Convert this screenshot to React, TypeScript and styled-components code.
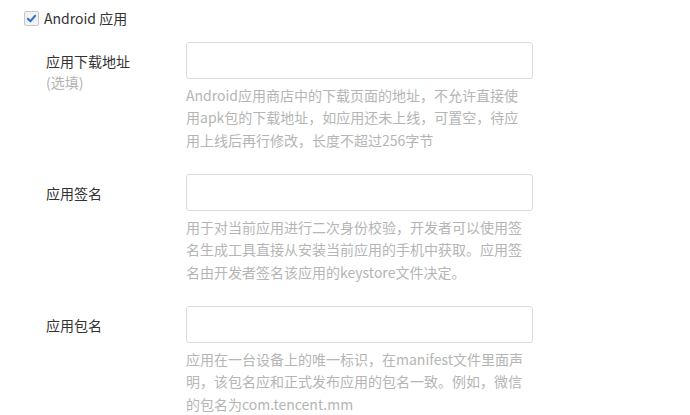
import React from "react";
import styled, { createGlobalStyle } from "styled-components";

const Global = createGlobalStyle`
  html, body { margin: 0; padding: 0; background: #fff; }
  body { font-family: "Noto Sans CJK SC", "Noto Sans", sans-serif; }
`;

const Page = styled.div`
  padding: 7px 0 0 24px;
`;

const CheckRow = styled.label`
  display: flex;
  align-items: center;
  gap: 5px;
  height: 22px;
  font-size: 14px;
  color: #333;
`;

const Box = styled.span`
  width: 13px;
  height: 13px;
  border: 1px solid #c8c8c8;
  border-radius: 2px;
  background: #f2f2f2;
  display: flex;
  align-items: center;
  justify-content: center;
`;

const Fields = styled.div`
  display: flex;
  flex-direction: column;
  gap: 22.8px;
  margin-top: 13px;
  padding-left: 22px;
`;

const Row = styled.div`
  display: grid;
  grid-template-columns: 140px 347px;
`;

const Label = styled.div`
  padding-top: 9px;
  font-size: 14px;
  line-height: 21px;
  color: #333;
`;

const Optional = styled.div`
  color: #b3b3b3;
`;

const Control = styled.div`
  display: flex;
  flex-direction: column;
`;

const Input = styled.input`
  box-sizing: border-box;
  width: 347px;
  height: 37px;
  border: 1px solid #dcdcdc;
  border-radius: 3px;
  background: #fff;
  outline: none;
  padding: 0 10px;
  font: inherit;
`;

const Help = styled.div`
  margin-top: 5px;
  width: 340px;
  font-size: 14px;
  line-height: 22.4px;
  color: #b5b5b5;
`;

const fields = [
  {
    label: "应用下载地址",
    optional: true,
    help: "Android应用商店中的下载页面的地址，不允许直接使用apk包的下载地址，如应用还未上线，可置空，待应用上线后再行修改，长度不超过256字节",
  },
  {
    label: "应用签名",
    optional: false,
    help: "用于对当前应用进行二次身份校验，开发者可以使用签名生成工具直接从安装当前应用的手机中获取。应用签名由开发者签名该应用的keystore文件决定。",
  },
  {
    label: "应用包名",
    optional: false,
    help: "应用在一台设备上的唯一标识，在manifest文件里面声明，该包名应和正式发布应用的包名一致。例如，微信的包名为com.tencent.mm",
  },
];

export default function App() {
  return (
    <>
      <Global />
      <Page>
        <CheckRow>
          <Box>
            <svg width="11" height="11" viewBox="0 0 12 12">
              <path d="M2 6.3 L4.8 9 L10 3" fill="none" stroke="#2f77c4" strokeWidth="2.2" strokeLinecap="round" strokeLinejoin="round" />
            </svg>
          </Box>
          Android 应用
        </CheckRow>
        <Fields>
          {fields.map((f) => (
            <Row key={f.label}>
              <Label>
                {f.label}
                {f.optional && <Optional>(选填)</Optional>}
              </Label>
              <Control>
                <Input type="text" />
                <Help>{f.help}</Help>
              </Control>
            </Row>
          ))}
        </Fields>
      </Page>
    </>
  );
}
